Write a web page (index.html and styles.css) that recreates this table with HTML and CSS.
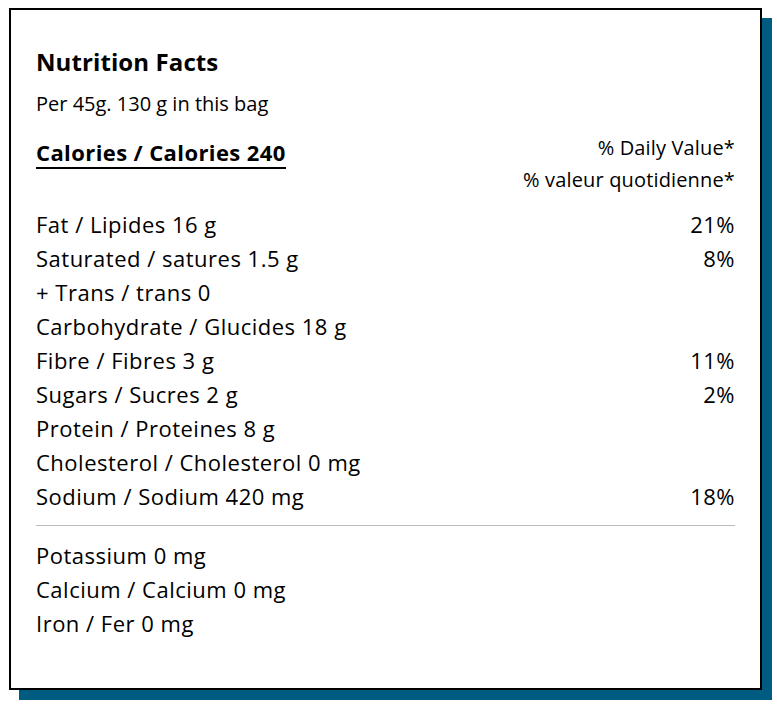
FILE: index.html
```html
<!DOCTYPE html>
<html lang="en">
<head>
<meta charset="utf-8">
<title>Nutrition Facts</title>
<link rel="stylesheet" href="styles.css">
</head>
<body>
<section class="label">
  <h1 class="title">Nutrition Facts</h1>
  <p class="serving">Per 45g. 130 g in this bag</p>
  <div class="header">
    <div class="calories">Calories / Calories 240</div>
    <div class="dv">
      <div>% Daily Value*</div>
      <div>% valeur quotidienne*</div>
    </div>
  </div>
  <ul class="rows">
    <li><span>Fat / Lipides 16 g</span><span>21%</span></li>
    <li><span>Saturated / satures 1.5 g</span><span>8%</span></li>
    <li><span>+ Trans / trans 0</span><span></span></li>
    <li><span>Carbohydrate / Glucides 18 g</span><span></span></li>
    <li><span>Fibre / Fibres 3 g</span><span>11%</span></li>
    <li><span>Sugars / Sucres 2 g</span><span>2%</span></li>
    <li><span>Protein / Proteines 8 g</span><span></span></li>
    <li><span>Cholesterol / Cholesterol 0 mg</span><span></span></li>
    <li><span>Sodium / Sodium 420 mg</span><span>18%</span></li>
  </ul>
  <hr class="divider">
  <ul class="rows minerals">
    <li><span>Potassium 0 mg</span></li>
    <li><span>Calcium / Calcium 0 mg</span></li>
    <li><span>Iron / Fer 0 mg</span></li>
  </ul>
</section>
</body>
</html>
```
FILE: styles.css
```css
* { box-sizing: border-box; }
html, body { margin: 0; padding: 0; background: #fff; }
body {
  font-family: "Open Sans", "Noto Sans", sans-serif;
  color: #000;
  min-height: 710px;
}
.label {
  width: 753px;
  height: 682px;
  margin: 8px 0 20px 9px;
  border: 2px solid #000;
  box-shadow: 10px 10px 0 #005b80;
  padding: 38px 25px 0 25px;
  background: #fff;
}
.title {
  margin: 0;
  font-size: 24px;
  line-height: 28px;
  font-weight: 700;
  letter-spacing: 0.1px;
}
.serving {
  margin: 16px 0 0;
  font-size: 20px;
  line-height: 24px;
}
.header {
  display: flex;
  justify-content: space-between;
  align-items: flex-start;
  margin-top: 16px;
}
.calories {
  margin-top: 5px;
  font-size: 22px;
  line-height: 30px;
  font-weight: 700;
  letter-spacing: 0.4px;
  border-bottom: 2px solid #000;
}
.dv {
  text-align: right;
  font-size: 20px;
  line-height: 32px;
  letter-spacing: 0.15px;
}
.rows {
  list-style: none;
  margin: 11px 0 0;
  padding: 0;
}
.rows li {
  display: flex;
  justify-content: space-between;
  font-size: 22px;
  line-height: 34px;
  letter-spacing: 0.5px;
}
.divider {
  margin: 12px 0 0;
  border: 0;
  border-top: 1px solid #bbb;
  height: 0;
}
.minerals { margin-top: 12px; }
```
